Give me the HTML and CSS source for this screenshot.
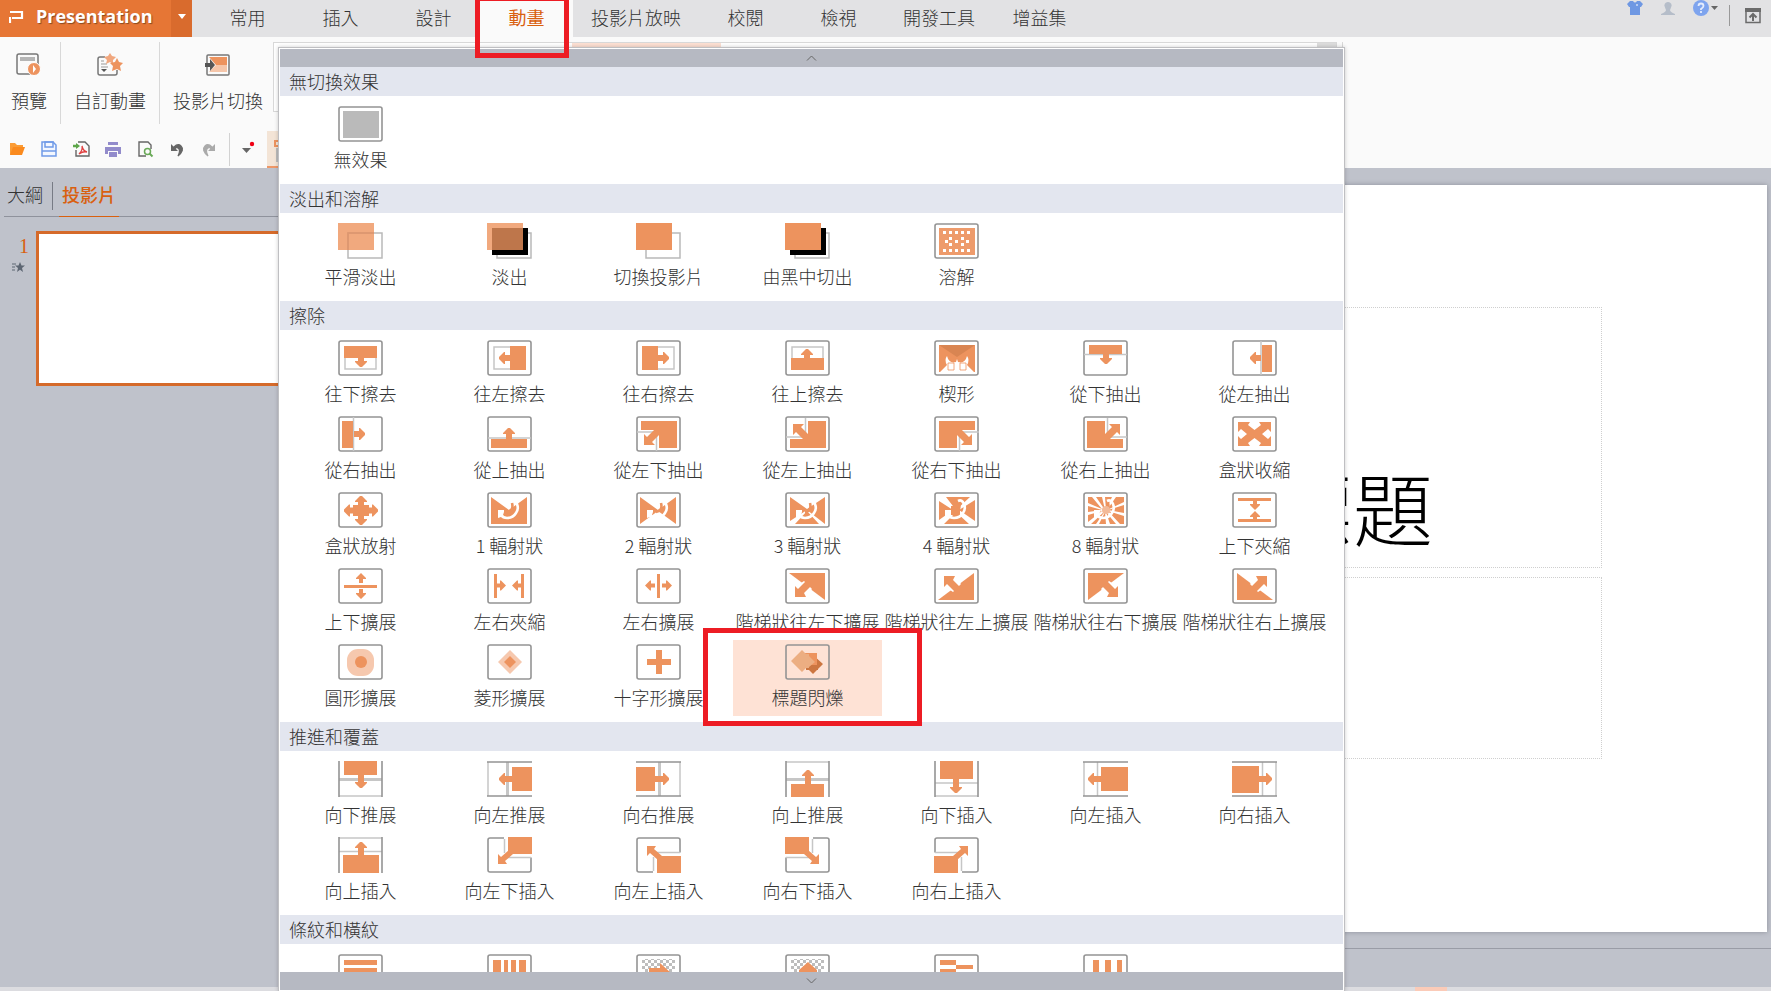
FILE: index.html
```html
<!DOCTYPE html>
<html lang="zh-Hant">
<head>
<meta charset="utf-8">
<title>Presentation</title>
<meta name="viewport" content="width=device-width, initial-scale=1">
<link rel="stylesheet" href="styles.css">
</head>
<body>
<svg class="defs" aria-hidden="true">
  <defs>
    <pattern id="checker" width="6" height="6" patternUnits="userSpaceOnUse"><path d="M0 0h3v3H0zM3 3h3v3H3z" fill="#bdbdbd"/></pattern>
    <g id="frame"><rect x="1" y="1" width="43" height="34" rx="2" fill="none" stroke="#949494" stroke-width="1.6"/></g>
    <g id="arrow"><path d="M-3-1h6v5h3v1l-3 3-2 2h-2l-2-2-3-3v-1h3z"/></g>
    <g id="arrow-long"><path d="M-3-1h6v8h3v1l-3 3-2 2h-2l-2-2-3-3v-1h3z"/></g>
    <g id="arrow-small"><path d="M-2-1h4v4h3v1l-5 5-5-5v-1h3z"/></g>
    <g id="arrow-diag"><path d="M0 0v-11l3 3 9-9 5 5-9 9 3 3z"/></g>
    <g id="pull"><path d="M5 5h36v27H23V18l-4-4H5z"/><path d="M1 16h16M20.500 20v15" class="rule"/><use href="#arrow-diag" transform="translate(8 29)"/></g>
    <g id="cover"><path d="M17 1H3Q1 1 1 3v30q0 2 2 2h39q2 0 2-2V20.500" class="edge"/><path d="M17.500 2v14M20 20.500h24" class="rule"/><path d="M21 0h24v17H21z"/><path d="M11 27V17l3 3 8-7 4 4-8 7 2 3z"/></g>
    <g id="stairs"><path d="M4 5h36v27z"/><path d="M8 31V14l5 3 6-4 8 8-5 6 3 4z" class="gap"/><path d="M10 29v-11l3 3 8-8 5 5-7 7 2 4z"/></g>
    <g id="swirl"><path d="M24 9q4-2 6 3t-1 9q-3 5-9 5-4 0-6-3" fill="none" stroke="#fff" stroke-width="2.600"/><path d="M11 18h6v2l-1 3 2 3-4-1-3 1z" fill="#fff"/><path d="M25 11q2 8-5 9" fill="none" stroke="#ed935e" stroke-width="2.600"/></g>
    <g id="outline-back"><path d="M10 10h34v25H10z" fill="none" stroke="#b9b9b9" stroke-width="1.500"/></g>
  </defs>
</svg>

<header class="titlebar">
  <div class="brand">
    <svg class="brand-logo" viewBox="0 0 16 14"><path d="M1 2h12v6H3M1 7v6" fill="none" stroke="#fff" stroke-width="2.200"/></svg>
    <span class="brand-name">Presentation</span>
    <button class="brand-menu" aria-label="選單"><svg width="8" height="5"><path d="M0 0h8L4 5z" fill="#fff"/></svg></button>
  </div>
  <nav class="tabs">
    <button class="tab">常用</button>
    <button class="tab">插入</button>
    <button class="tab">設計</button>
    <button class="tab tab-active">動畫<span class="mark mark-tab"></span></button>
    <button class="tab">投影片放映</button>
    <button class="tab">校閱</button>
    <button class="tab">檢視</button>
    <button class="tab">開發工具</button>
    <button class="tab">增益集</button>
  </nav>
  <div class="tools">
    <button aria-label="外觀"><svg width="16" height="16"><path d="M3 1h3q2 3 4 0h3l3 3-2 3h-1v8H3V7H2L0 4z" fill="#6f98e3"/><path d="M9 5h2" stroke="#fff"/></svg></button>
    <button aria-label="帳號"><svg width="14" height="16"><path d="M7 2a3.500 3.500 0 0 1 3 5.500L9 10q0 2 5 4v1H0v-1q5-2 5-4L4 7.500A3.500 3.500 0 0 1 7 2z" fill="#b5bdc9"/></svg></button>
    <button aria-label="說明"><svg width="26" height="16"><circle cx="8" cy="8" r="8" fill="#7ea4ee"/><path d="M5.500 6q0-2.500 2.500-2.500T10.500 6q0 1.300-2.500 3v1M8 11v2" fill="none" stroke="#e4ecfc" stroke-width="1.800"/><path d="M18 6h7l-3.500 4z" fill="#666"/></svg></button>
    <span class="tools-line"></span>
    <button class="fold" aria-label="隱藏功能區"><svg width="16" height="16"><path d="M1 1h14v13.500H1z" fill="none" stroke="#6b6b6b" stroke-width="1.500"/><path d="M0 0h16v4H0z" fill="#6b6b6b"/><path d="M8 13V7M4.500 9.500L8 6l3.500 3.500" fill="none" stroke="#6b6b6b" stroke-width="2"/></svg></button>
  </div>
</header>

<section class="ribbon">
  <div class="ribbon-row">
    <button class="big big-preview"><svg width="26" height="24"><rect x="1" y="1" width="21" height="20" rx="2" fill="none" stroke="#777" stroke-width="1.500"/><path d="M4 4h15v4H4z" fill="#b5b5b5"/><circle cx="18" cy="16" r="6.500" fill="#ed935e" stroke="#fff"/><path d="M17 12l3 4-3 4z" fill="#fff"/></svg><span>預覽</span></button>
    <button class="big big-custom"><svg width="26" height="24"><path d="M8 4H3Q1 4 1 6v14q0 2 2 2h15q2 0 2-2v-3" fill="none" stroke="#777" stroke-width="1.500"/><path d="M4 8h3M4 11h6M4 14h7" stroke="#999"/><path d="M4 16h6l-3 3z" fill="#555"/><path d="M13 0l2 3 4 1-3 3v4l-3-2-4 2 1-4-3-3 4-1z" fill="#f1a77e"/><path d="M20 5l2 4 4 1-3 3 1 5-4-2-5 2 1-5-3-3 5-1z" fill="#ed935e"/></svg><span>自訂動畫</span></button>
    <button class="big big-switch"><svg width="26" height="24"><rect x="2" y="2" width="22" height="20" rx="1" fill="none" stroke="#777" stroke-width="1.500"/><path d="M4 4h18v8H11z" fill="#ed935e"/><path d="M11 12h11v7H4z" fill="#f5c6aa"/><path d="M0 10h5V6l5 6-5 6v-4H0z" fill="#555"/></svg><span>投影片切換</span></button>
    <div class="gallery"><span class="gallery-hot"></span><span class="gallery-scroll"></span></div>
    <span class="ribbon-end"></span>
  </div>
  <div class="quick">
    <button aria-label="開啟"><svg width="18" height="18"><path d="M2 15V3h5l2 2h6v3" fill="#fb9c35"/><path d="M5 7h12l-3 8H2z" fill="#fa8a1e"/></svg></button>
    <button aria-label="儲存"><svg width="18" height="18"><path d="M2 2h11l3 3v11H2z" fill="#f3f7ff" stroke="#709be8" stroke-width="1.500"/><path d="M5 2h8v5H5zM2 11h14" fill="none" stroke="#709be8" stroke-width="1.500"/></svg></button>
    <button aria-label="輸出 PDF"><svg width="18" height="18"><path d="M6 2h7l4 4v10H4v-6" fill="none" stroke="#666" stroke-width="1.400"/><path d="M1 6h5" stroke="#5da64a" stroke-width="2.500"/><path d="M4 3l4 3-4 3z" fill="#5da64a"/><path d="M7 14q4-4 3-8 1 5 5 6-4-1-8 2z" fill="none" stroke="#e04040" stroke-width="1.300"/></svg></button>
    <button aria-label="列印"><svg width="18" height="18"><path d="M4 2h10v3H4zM1 7h16v7h-3v-3H4v3H1zM5 12h8v5H5z" fill="#928bcb"/></svg></button>
    <button aria-label="預覽列印"><svg width="18" height="18"><path d="M10 16H3V2h9l3 3v4" fill="none" stroke="#666" stroke-width="1.400"/><circle cx="11.500" cy="11.500" r="3" fill="none" stroke="#69a957" stroke-width="1.500"/><path d="M13.500 13.500l3 3" stroke="#69a957" stroke-width="2"/></svg></button>
    <button aria-label="復原"><svg width="18" height="18"><path d="M6 7q4-4 7-1 4 4-3 10 3-6 0-8-2-1-3 1z" fill="#666" stroke="#666" stroke-width="1.200"/><path d="M3 4v7h7z" fill="#666"/></svg></button>
    <button aria-label="重做"><svg width="18" height="18"><path d="M12 7Q8 3 5 6q-4 4 3 10-3-6 0-8 2-1 3 1z" fill="#aaa" stroke="#aaa" stroke-width="1.200"/><path d="M15 4v7H8z" fill="#aaa"/></svg></button>
    <span class="quick-line"></span>
    <button class="quick-more" aria-label="更多"><svg width="18" height="18"><path d="M4 8h9l-4.500 5z" fill="#666"/><circle cx="14" cy="4" r="2.200" fill="#f00014"/></svg></button>
    <span class="doc-tab"><svg width="12" height="26"><path d="M8 5h7v5H8z" fill="none" stroke="#ed935e" stroke-width="2"/><path d="M10 12v14" stroke="#bbb" stroke-width="2"/></svg></span>
  </div>
</section>

<main class="work">
  <aside class="side">
    <div class="side-tabs">
      <button class="side-tab">大綱</button>
      <button class="side-tab side-tab-on">投影片</button>
    </div>
    <div class="thumb-row">
      <div class="thumb-info"><span>1</span><svg width="13" height="11"><path d="M8 0l1.500 3.500H13l-3 2.500 1 4-3-2.200L5 10l1-4-3-2.500h3.500z" fill="#5d6673"/><path d="M0 2h4M0 5h3M0 8h3" stroke="#5d6673"/></svg></div>
      <div class="thumb"></div>
    </div>
  </aside>
  <section class="stage">
    <div class="slide">
      <div class="holder holder-title">標題</div>
      <div class="holder holder-sub"></div>
    </div>
    <div class="notes"></div>
  </section>
</main>
<footer class="status"><span class="status-on"></span></footer>

<div class="popup">
  <button class="scroller" aria-label="向上捲動"><svg width="11" height="6"><path d="M1 5.500l4.500-4.500L10 5.500" fill="none" stroke="#666"/></svg></button>
  <div class="list">
    <h2>無切換效果</h2>
    <div class="grid">
      <button class="tile"><svg class="fx" viewBox="0 0 45 36"><use href="#frame"/><path d="M5 5h36v27H5z" fill="#bababa"/></svg>無效果</button>
    </div>

    <h2>淡出和溶解</h2>
    <div class="grid">
      <button class="tile"><svg class="fx" viewBox="0 0 45 36"><use href="#outline-back"/><path d="M0 0h36v27H0z" opacity=".8"/><path d="M10 27V10h26" fill="none" stroke="#dc9770" stroke-width="1.500"/></svg>平滑淡出</button>
      <button class="tile"><svg class="fx" viewBox="0 0 45 36"><use href="#outline-back"/><path d="M5 5h36v27H5z" fill="#000"/><path d="M0 0h36v27H0z" opacity=".8"/></svg>淡出</button>
      <button class="tile"><svg class="fx" viewBox="0 0 45 36"><use href="#outline-back"/><path d="M0 0h36v27H0z"/></svg>切換投影片</button>
      <button class="tile"><svg class="fx" viewBox="0 0 45 36"><use href="#outline-back"/><path d="M5 5h36v27H5z" fill="#000"/><path d="M0 0h36v27H0z"/></svg>由黑中切出</button>
      <button class="tile"><svg class="fx" viewBox="0 0 45 36"><use href="#frame"/><path d="M5 5h36v27H5z" opacity=".92"/><path d="M9 9.500h29M9 27.500h29" stroke="#fff" stroke-width="3" stroke-dasharray="3 3"/><path d="M15 14h3v3h-3zM27 14h3v3h-3zM11 17h3v3h-3zM21 17h3v3h-3zM32 17h3v3h-3zM15 20h3v3h-3zM27 20h3v3h-3z" fill="#fff"/></svg>溶解</button>
    </div>

    <h2>擦除</h2>
    <div class="grid">
      <button class="tile"><svg class="fx" viewBox="0 0 45 36"><use href="#frame"/><path d="M7 7h31v22H7z" class="rule"/><path d="M6 6h33v12H6z"/><use href="#arrow" transform="translate(23 17)"/></svg>往下擦去</button>
      <button class="tile"><svg class="fx" viewBox="0 0 45 36"><use href="#frame"/><path d="M7 7h31v22H7z" class="rule"/><path d="M23 6h16v24H23z"/><use href="#arrow" transform="translate(22 18) rotate(90)"/></svg>往左擦去</button>
      <button class="tile"><svg class="fx" viewBox="0 0 45 36"><use href="#frame"/><path d="M7 7h31v22H7z" class="rule"/><path d="M6 6h16v24H6z"/><use href="#arrow" transform="translate(23 18) rotate(-90)"/></svg>往右擦去</button>
      <button class="tile"><svg class="fx" viewBox="0 0 45 36"><use href="#frame"/><path d="M7 7h31v22H7z" class="rule"/><path d="M6 18h33v12H6z"/><use href="#arrow" transform="translate(22 19) rotate(180)"/></svg>往上擦去</button>
      <button class="tile"><svg class="fx" viewBox="0 0 45 36"><use href="#frame"/><path d="M5 5h36v27H5z"/><path d="M5 5h36L23 17z" fill="#d98552"/><path d="M6 32l7-7q-3-5 0-9 2 8 9 6l1-3 1 3q7 2 9-6 3 4 0 9l7 7z" fill="#fff"/><path d="M14 23h6v7h-6zM26 23h6v7h-6z" fill="#fff" stroke="#ed935e" stroke-width=".8"/></svg>楔形</button>
      <button class="tile"><svg class="fx" viewBox="0 0 45 36"><use href="#frame"/><path d="M1 14.500h43" class="rule"/><path d="M6 5h33v9H6z"/><use href="#arrow" transform="translate(23 14)"/></svg>從下抽出</button>
      <button class="tile"><svg class="fx" viewBox="0 0 45 36"><use href="#frame"/><path d="M29 1v34" class="rule"/><path d="M30 5h10v27H30z"/><use href="#arrow" transform="translate(28 18) rotate(90)"/></svg>從左抽出</button>

      <button class="tile"><svg class="fx" viewBox="0 0 45 36"><use href="#frame"/><path d="M15.500 1v34" class="rule"/><path d="M4 5h11v27H4z"/><use href="#arrow" transform="translate(17 18) rotate(-90)"/></svg>從右抽出</button>
      <button class="tile"><svg class="fx" viewBox="0 0 45 36"><use href="#frame"/><path d="M1 22h43" class="rule"/><path d="M4 23h36v9H4z"/><use href="#arrow" transform="translate(22 22) rotate(180)"/></svg>從上抽出</button>
      <button class="tile"><svg class="fx" viewBox="0 0 45 36"><use href="#frame"/><use href="#pull"/></svg>從左下抽出</button>
      <button class="tile"><svg class="fx" viewBox="0 0 45 36"><use href="#frame"/><use href="#pull" transform="translate(0 37) scale(1 -1)"/></svg>從左上抽出</button>
      <button class="tile"><svg class="fx" viewBox="0 0 45 36"><use href="#frame"/><use href="#pull" transform="translate(46 0) scale(-1 1)"/></svg>從右下抽出</button>
      <button class="tile"><svg class="fx" viewBox="0 0 45 36"><use href="#frame"/><use href="#pull" transform="translate(45 37) scale(-1 -1)"/></svg>從右上抽出</button>
      <button class="tile"><svg class="fx" viewBox="0 0 45 36"><use href="#frame"/><path d="M6 6h12l-2 3 6.500 5L29 9l-2-3h12v10l-3-3-6 5 6 5 3-3v10H27l2-3-6.500-5-6.500 5 2 3H6V20l3 3 6-5-6-5-3 3z"/></svg>盒狀收縮</button>

      <button class="tile"><svg class="fx" viewBox="0 0 45 36"><use href="#frame"/><path d="M15 13h16v11H15z"/><use href="#arrow" transform="translate(23 23)"/><use href="#arrow" transform="translate(23 14) rotate(180)"/><use href="#arrow" transform="translate(16 18.500) rotate(90)"/><use href="#arrow" transform="translate(30 18.500) rotate(-90)"/></svg>盒狀放射</button>
      <button class="tile"><svg class="fx" viewBox="0 0 45 36"><use href="#frame"/><path d="M4 5l18 13L40 5v27H4z"/><use href="#swirl"/></svg>1 輻射狀</button>
      <button class="tile"><svg class="fx" viewBox="0 0 45 36"><use href="#frame"/><path d="M4 5l18 13L40 5v27L22 19 4 32z"/><use href="#swirl"/></svg>2 輻射狀</button>
      <button class="tile"><svg class="fx" viewBox="0 0 45 36"><use href="#frame"/><path d="M5 5l17 12L40 5v27L22 18 5 29z"/><path d="M22 19l12 13H10z"/><use href="#swirl"/></svg>3 輻射狀</button>
      <button class="tile"><svg class="fx" viewBox="0 0 45 36"><use href="#frame"/><path d="M5 5h36v27H5z"/><path d="M5 5h7l10 13L36 5h5v3L25 18l16 11v3h-6L22 20 10 32H5v-4l14-10L5 9z" fill="#fff"/><path d="M17 14h9v9h-9z"/><use href="#swirl"/></svg>4 輻射狀</button>
      <button class="tile"><svg class="fx" viewBox="0 0 45 36"><use href="#frame"/><path d="M5 5h36v27H5z"/><path d="M9 5h4l9 13L19 5h3l1 13 6-13h4l-9 13 17-8v3l-16 5 16 3v3l-16-5 12 13h-4L23 20l4 12h-4l-1-12-6 12h-3l9-13L8 32H5v-2l14-11-14 4v-3l14-2-14-4v-3l14 6z" fill="#fff"/><use href="#swirl"/><circle cx="23" cy="18" r="4" fill="#f3ba98"/></svg>8 輻射狀</button>
      <button class="tile"><svg class="fx" viewBox="0 0 45 36"><use href="#frame"/><path d="M6 6h33v3H6zM6 27h33v3H6z"/><use href="#arrow-small" transform="translate(23 9)"/><use href="#arrow-small" transform="translate(23 28) rotate(180)"/></svg>上下夾縮</button>

      <button class="tile"><svg class="fx" viewBox="0 0 45 36"><use href="#frame"/><path d="M6 17h33v3H6z"/><use href="#arrow-small" transform="translate(23 14) rotate(180)"/><use href="#arrow-small" transform="translate(23 22)"/></svg>上下擴展</button>
      <button class="tile"><svg class="fx" viewBox="0 0 45 36"><use href="#frame"/><path d="M7 6h3v24H7zM34 6h3v24h-3z"/><use href="#arrow-small" transform="translate(10 17.500) rotate(-90)"/><use href="#arrow-small" transform="translate(34 17.500) rotate(90)"/></svg>左右夾縮</button>
      <button class="tile"><svg class="fx" viewBox="0 0 45 36"><use href="#frame"/><path d="M21 6h3v24h-3z"/><use href="#arrow-small" transform="translate(18 17.500) rotate(90)"/><use href="#arrow-small" transform="translate(27 17.500) rotate(-90)"/></svg>左右擴展</button>
      <button class="tile"><svg class="fx" viewBox="0 0 45 36"><use href="#frame"/><use href="#stairs"/></svg>階梯狀往左下擴展</button>
      <button class="tile"><svg class="fx" viewBox="0 0 45 36"><use href="#frame"/><use href="#stairs" transform="translate(0 37) scale(1 -1)"/></svg>階梯狀往左上擴展</button>
      <button class="tile"><svg class="fx" viewBox="0 0 45 36"><use href="#frame"/><use href="#stairs" transform="translate(45 0) scale(-1 1)"/></svg>階梯狀往右下擴展</button>
      <button class="tile"><svg class="fx" viewBox="0 0 45 36"><use href="#frame"/><use href="#stairs" transform="translate(45 37) scale(-1 -1)"/></svg>階梯狀往右上擴展</button>

      <button class="tile"><svg class="fx" viewBox="0 0 45 36"><use href="#frame"/><rect x="9" y="5" width="27" height="27" rx="11" fill="#f6c8ae"/><circle cx="23" cy="18" r="6"/></svg>圓形擴展</button>
      <button class="tile"><svg class="fx" viewBox="0 0 45 36"><use href="#frame"/><path d="M23 6l12 12-12 12-12-12z" fill="#f6c8ae"/><path d="M23 12l6 6-6 6-6-6z"/></svg>菱形擴展</button>
      <button class="tile"><svg class="fx" viewBox="0 0 45 36"><use href="#frame"/><path d="M20 6h6v9h9v6h-9v9h-6v-9h-9v-6h9z"/></svg>十字形擴展</button>
      <button class="tile tile-on"><svg class="fx" viewBox="0 0 45 36"><use href="#frame"/><path d="M28 11l10 9-3 3-2 2v1h-1l-4 4-4-4h-3V14z" fill="#cc7641"/><path d="M20 9h12v12H20z"/><path d="M6 17L17 6l4 4h3v2l6 6-6 5v1h-3l-4 4z" fill="#ecae82"/></svg>標題閃爍<span class="mark mark-tile"></span></button>
    </div>

    <h2>推進和覆蓋</h2>
    <div class="grid">
      <button class="tile"><svg class="fx" viewBox="0 0 45 36"><path d="M1 35h43" class="rule"/><path d="M1 18.500h43" class="rule rule-wide"/><path d="M1 0v36M44 0v36" class="edge"/><path d="M6 0h33v14H6z"/><use href="#arrow-long" transform="translate(23 14)"/></svg>向下推展</button>
      <button class="tile"><svg class="fx" viewBox="0 0 45 36"><path d="M1 1v34" class="rule"/><path d="M20.500 1v34" class="rule rule-wide"/><path d="M0 1h45M0 35h45" class="edge"/><path d="M25 6h20v24H25z"/><use href="#arrow-long" transform="translate(25 18) rotate(90)"/></svg>向左推展</button>
      <button class="tile"><svg class="fx" viewBox="0 0 45 36"><path d="M44 1v34" class="rule"/><path d="M23.500 1v34" class="rule rule-wide"/><path d="M0 1h45M0 35h45" class="edge"/><path d="M0 6h19v24H0z"/><use href="#arrow-long" transform="translate(20 18) rotate(-90)"/></svg>向右推展</button>
      <button class="tile"><svg class="fx" viewBox="0 0 45 36"><path d="M1 1h43" class="rule"/><path d="M1 18.500h43" class="rule rule-wide"/><path d="M1 0v36M44 0v36" class="edge"/><path d="M6 23h33v13H6z"/><use href="#arrow-long" transform="translate(23 22) rotate(180)"/></svg>向上推展</button>
      <button class="tile"><svg class="fx" viewBox="0 0 45 36"><path d="M1 35h43M1 22h43" class="rule"/><path d="M1 0v36M44 0v36" class="edge"/><path d="M6 0h33v18H6z"/><use href="#arrow-long" transform="translate(22 19)"/></svg>向下插入</button>
      <button class="tile"><svg class="fx" viewBox="0 0 45 36"><path d="M1 1v34M14.500 1v34" class="rule"/><path d="M0 1h45M0 35h45" class="edge"/><path d="M18 6h27v24H18z"/><use href="#arrow-long" transform="translate(18 18) rotate(90)"/></svg>向左插入</button>
      <button class="tile"><svg class="fx" viewBox="0 0 45 36"><path d="M44 1v34M30.500 1v34" class="rule"/><path d="M0 1h45M0 35h45" class="edge"/><path d="M0 5h27v27H0z"/><use href="#arrow-long" transform="translate(27 18) rotate(-90)"/></svg>向右插入</button>

      <button class="tile"><svg class="fx" viewBox="0 0 45 36"><path d="M1 1h43M1 14.500h43" class="rule"/><path d="M1 0v36M44 0v36" class="edge"/><path d="M5 18h36v18H5z"/><use href="#arrow-long" transform="translate(23 18) rotate(180)"/></svg>向上插入</button>
      <button class="tile"><svg class="fx" viewBox="0 0 45 36"><use href="#cover"/></svg>向左下插入</button>
      <button class="tile"><svg class="fx" viewBox="0 0 45 36"><use href="#cover" transform="translate(0 36) scale(1 -1)"/></svg>向左上插入</button>
      <button class="tile"><svg class="fx" viewBox="0 0 45 36"><use href="#cover" transform="translate(45 0) scale(-1 1)"/></svg>向右下插入</button>
      <button class="tile"><svg class="fx" viewBox="0 0 45 36"><use href="#cover" transform="translate(45 36) scale(-1 -1)"/></svg>向右上插入</button>
    </div>

    <h2>條紋和橫紋</h2>
    <div class="grid">
      <button class="tile" aria-label="水平百葉窗"><svg class="fx" viewBox="0 0 45 36"><use href="#frame"/><path d="M6 6h33v5H6zM6 14h33v5H6zM6 22h33v5H6z"/></svg></button>
      <button class="tile" aria-label="垂直百葉窗"><svg class="fx" viewBox="0 0 45 36"><use href="#frame"/><path d="M6 6h8v24H6zM17 6h4v24h-4zM24 6h5v24h-5zM32 6h7v24h-7z"/></svg></button>
      <button class="tile" aria-label="水平棋盤"><svg class="fx" viewBox="0 0 45 36"><use href="#frame"/><path d="M6 5h33v25H6z" fill="url(#checker)"/><path d="M13 14h11V9l11 10-11 9v-5H13z"/></svg></button>
      <button class="tile" aria-label="垂直棋盤"><svg class="fx" viewBox="0 0 45 36"><use href="#frame"/><path d="M6 5h33v25H6z" fill="url(#checker)"/><path d="M23 8l9 8v3h-5v9h-8v-9h-5v-3z"/></svg></button>
      <button class="tile" aria-label="水平梳狀"><svg class="fx" viewBox="0 0 45 36"><use href="#frame"/><path d="M6 6h16v5H6zM22 11h17v4H22zM6 15h16v5H6z"/></svg></button>
      <button class="tile" aria-label="垂直梳狀"><svg class="fx" viewBox="0 0 45 36"><use href="#frame"/><path d="M10 6h6v14h-6zM22 6h6v14h-6zM34 6h5v14h-5z"/></svg></button>
    </div>
  </div>
  <button class="scroller" aria-label="向下捲動"><svg width="11" height="6"><path d="M1 .5L5.500 5 10 .5" fill="none" stroke="#666"/></svg></button>
</div>
</body>
</html>
```
FILE: styles.css
```css
* { box-sizing: border-box; }

body {
  margin: 0;
  height: 100vh;
  display: flex;
  flex-direction: column;
  position: relative;
  overflow: hidden;
  background: #bfc2cb;
  color: #333;
  font: 300 18px/24px "Noto Sans CJK TC", sans-serif;
}

button {
  margin: 0;
  padding: 0;
  border: 0;
  background: none;
  color: inherit;
  font: inherit;
  white-space: nowrap;
}

svg { display: block; }
.defs { position: absolute; width: 0; height: 0; }

/* title bar */
.titlebar {
  position: relative;
  z-index: 3;
  display: flex;
  height: 37px;
  flex: none;
  background: #e2e2e4;
}

.brand {
  display: flex;
  align-items: center;
  width: 192px;
  margin-right: 9px;
  background: #e67635;
}
.brand-logo { width: 16px; height: 14px; margin: 0 11px 4px 9px; }
.brand-name {
  flex: 1;
  padding-bottom: 6px;
  color: #fff;
  font: 700 18px/24px "Open Sans", sans-serif;
  text-shadow: 1px 1px 1px #8a4a20;
}
.brand-menu {
  display: flex;
  align-items: center;
  justify-content: center;
  width: 21px;
  height: 37px;
  padding-bottom: 5px;
  background: #d96b2d;
}

.tabs { display: flex; }
.tab {
  position: relative;
  min-width: 93px;
  padding: 0 18px 4px;
}
.tab-active { background: #fafafa; color: #d9600f; font-weight: 400; }

.tools {
  display: flex;
  align-items: flex-start;
  gap: 18px;
  margin-left: auto;
  padding-right: 10px;
}
.tools-line { width: 1px; height: 21px; margin: 5px -3px 0 -8px; background: #999; }
.fold { padding-top: 8px; }

/* highlight rectangles */
.mark { position: absolute; border: 5px solid #ed1c24; pointer-events: none; }
.mark-tab { inset: -4px 4px -21px -5px; }
.mark-tile { inset: -12px -40px -10px -30px; }

/* ribbon */
.ribbon { height: 131px; flex: none; background: #fafafa; }
.ribbon-row { display: flex; height: 94px; padding-top: 5px; }
.big {
  display: flex;
  flex-direction: column;
  align-items: center;
  gap: 11px;
  height: 82px;
  padding: 11px 13px 0;
  border-right: 1px solid #d8d8d8;
}
.big-preview { padding: 11px 13px 0 11px; }
.big-switch { border: 0; padding-right: 10px; }
.gallery {
  display: flex;
  width: 1064px;
  height: 70px;
  border: 1px solid #d8d8d8;
  background: #fff;
}
.gallery-hot { width: 149px; margin-left: 298px; background: #fde0d3; }
.gallery-scroll { width: 19px; margin-left: auto; background: #ddd; }
.ribbon-end { width: 1px; height: 82px; margin-left: 5px; background: #d8d8d8; }

.quick { display: flex; align-items: center; gap: 14px; height: 37px; padding: 0 0 1px 8px; }
.quick-line { width: 1px; height: 33px; margin-left: -3px; background: #d2d2d2; }
.quick-more { margin-left: -6px; }
.doc-tab { width: 160px; height: 37px; margin-left: -3px; padding-top: 5px; border-bottom: 2px solid #ee9767; background: #f3e4d6; }

/* workspace */
.work { display: flex; flex: 1; min-height: 0; }
.side { width: 300px; padding-left: 4px; }
.side-tabs { display: flex; height: 49px; padding-top: 14px; border-bottom: 1px solid #8f929c; }
.side-tab { height: 28px; padding: 0 9px 4px 3px; border-right: 1px solid #777b85; }
.side-tab-on {
  height: 35px;
  margin-left: 6px;
  padding: 0 3px 10px;
  border-right: 0;
  border-bottom: 1px solid #d9600f;
  color: #d9600f;
  font-weight: 500;
}
.thumb-row { display: flex; padding-top: 14px; }
.thumb-info {
  display: flex;
  flex-direction: column;
  align-items: flex-end;
  width: 32px;
  padding: 3px 7px 0 0;
  gap: 4px;
  color: #d9600f;
  font: 20px/24px "Liberation Serif", serif;
}
.thumb-info svg { margin-right: 4px; }
.thumb { flex: 1; height: 155px; border: 3px solid #d56a2a; background: #fff; }

.stage { display: flex; flex: 1; flex-direction: column; padding-top: 17px; }
.slide {
  display: flex;
  flex: 1;
  flex-direction: column;
  align-items: flex-end;
  gap: 9px;
  margin-right: 4px;
  padding: 122px 165px 0 0;
  background: #fff;
  box-shadow: 0 0 5px #8d909a;
}
.holder { width: 998px; border: 1px dotted #cfcfcf; }
.holder-title {
  height: 261px;
  padding: 141px 168px 0 0;
  color: #000;
  font-size: 80px;
  line-height: 112px;
  text-align: right;
}
.holder-sub { height: 182px; }
.notes { height: 39px; margin-top: 16px; border-top: 1px solid #999ca6; }
.status { display: flex; height: 4px; flex: none; justify-content: flex-end; background: #dcdce0; }
.status-on { width: 32px; margin-right: 324px; background: #fbcbb8; }

/* transition list */
.popup {
  position: absolute;
  top: 47px;
  bottom: -1px;
  left: 278px;
  z-index: 2;
  display: flex;
  flex-direction: column;
  padding: 1px;
  border: 1px solid #bfbfc2;
  background: #fff;
  box-shadow: 0 0 4px #0003;
}
.scroller {
  display: flex;
  flex: none;
  align-items: center;
  justify-content: center;
  height: 18px;
  background: #b6b9c2;
}
.list { flex: 1; min-height: 0; overflow: hidden; }
.list h2 {
  margin: 0;
  padding: 2px 9px 3px;
  background: #e3e6ef;
  font: inherit;
}
.grid {
  display: grid;
  grid-template-columns: repeat(7, 149px);
  grid-auto-rows: 76px;
  padding: 6px 14px 6px 6px;
}
.tile {
  position: relative;
  display: flex;
  flex-direction: column;
  align-items: center;
  gap: 5px;
  padding-top: 4px;
}
.tile-on { background: #fee2d5; }
.fx { width: 45px; height: 36px; fill: #ed935e; }
.rule { fill: none; stroke: #c6c6c6; stroke-width: 1.5; }
.rule-wide { stroke-width: 3; }
.edge { fill: none; stroke: #949494; stroke-width: 1.6; }
.gap { fill: #fff; }
```
